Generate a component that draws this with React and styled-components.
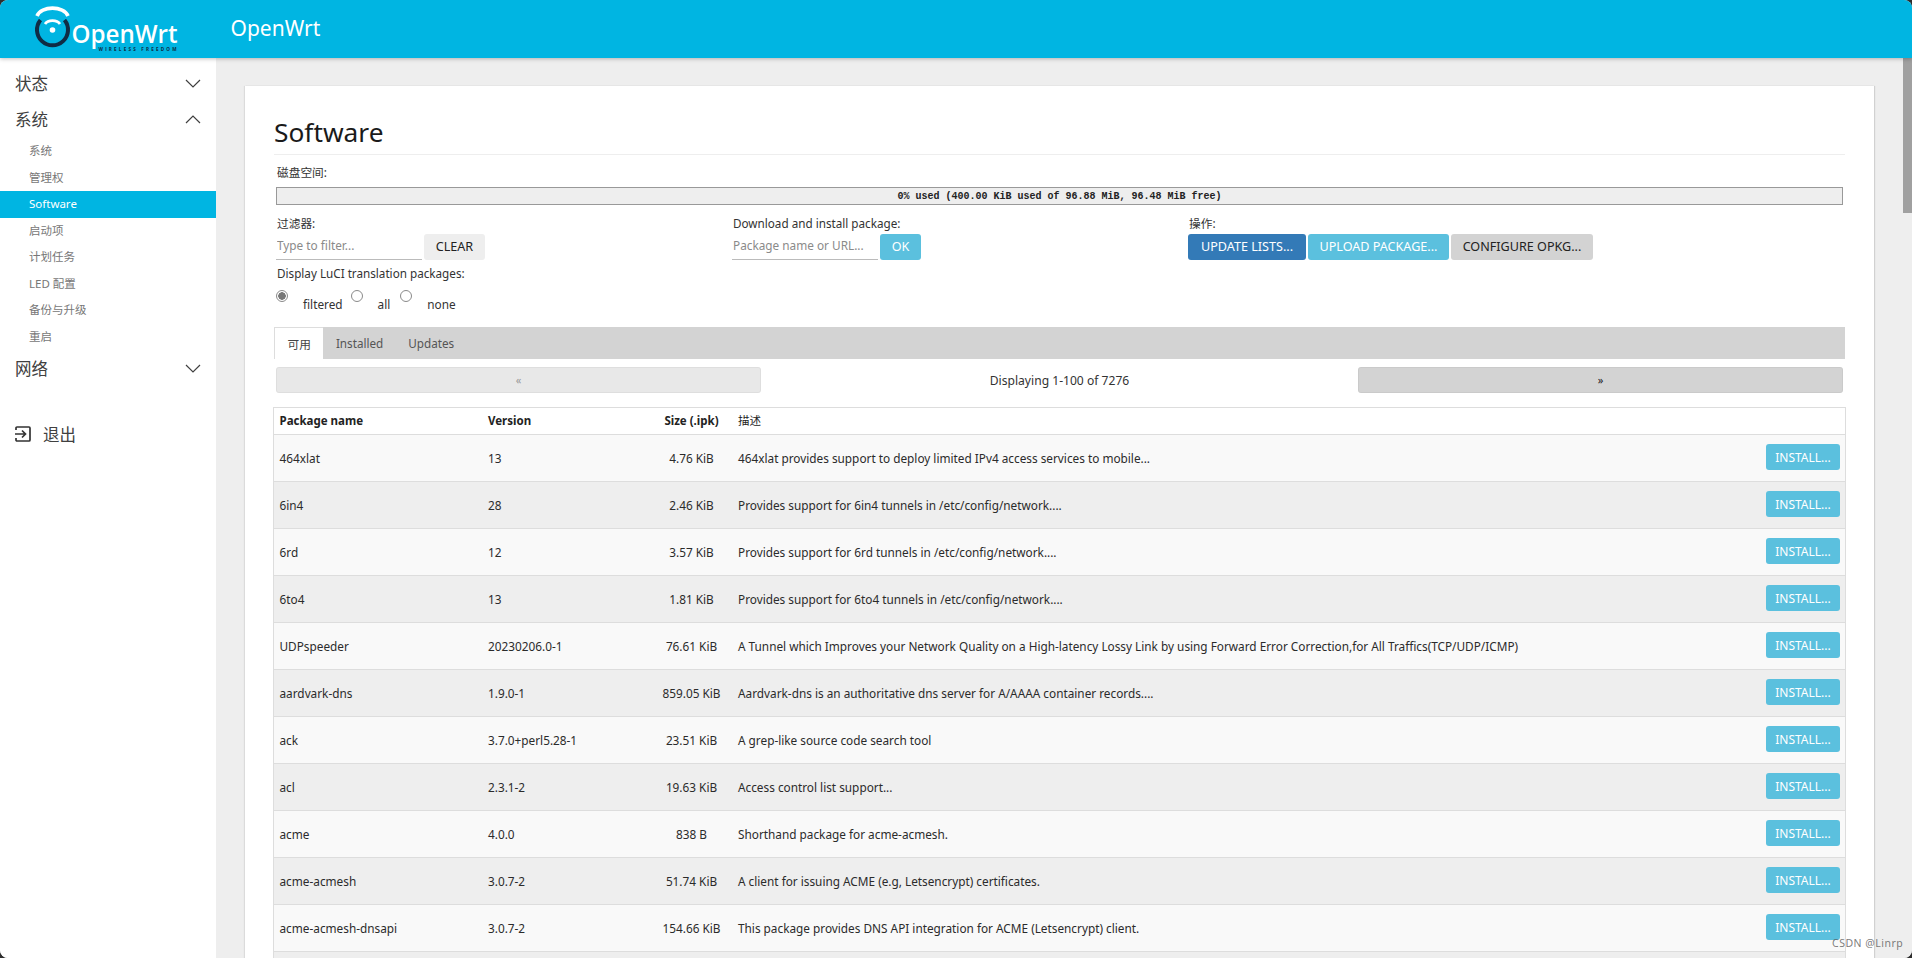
import styled, { createGlobalStyle } from "styled-components";

const GlobalStyle = createGlobalStyle`
html, body {
  margin: 0;
  padding: 0;
  height: 100%;
  overflow: hidden;
  background: #2e2e2e;
}
* {
  box-sizing: border-box;
}
`;

const FONT = `"Noto Sans", "Noto Sans CJK SC", sans-serif`;

const subItems = ["系统", "管理权", "Software", "启动项", "计划任务", "LED 配置", "备份与升级", "重启"];

const packages = [
  ["464xlat", "13", "4.76 KiB", "464xlat provides support to deploy limited IPv4 access services to mobile..."],
  ["6in4", "28", "2.46 KiB", "Provides support for 6in4 tunnels in /etc/config/network...."],
  ["6rd", "12", "3.57 KiB", "Provides support for 6rd tunnels in /etc/config/network...."],
  ["6to4", "13", "1.81 KiB", "Provides support for 6to4 tunnels in /etc/config/network...."],
  ["UDPspeeder", "20230206.0-1", "76.61 KiB", "A Tunnel which Improves your Network Quality on a High-latency Lossy Link by using Forward Error Correction,for All Traffics(TCP/UDP/ICMP)"],
  ["aardvark-dns", "1.9.0-1", "859.05 KiB", "Aardvark-dns is an authoritative dns server for A/AAAA container records...."],
  ["ack", "3.7.0+perl5.28-1", "23.51 KiB", "A grep-like source code search tool"],
  ["acl", "2.3.1-2", "19.63 KiB", "Access control list support..."],
  ["acme", "4.0.0", "838 B", "Shorthand package for acme-acmesh."],
  ["acme-acmesh", "3.0.7-2", "51.74 KiB", "A client for issuing ACME (e.g, Letsencrypt) certificates."],
  ["acme-acmesh-dnsapi", "3.0.7-2", "154.66 KiB", "This package provides DNS API integration for ACME (Letsencrypt) client."],
];

const Chevron = ({ up }) => (
  <svg width="16" height="9" viewBox="0 0 16 9" fill="none" stroke="#404040" strokeWidth="1.2">
    <polyline points={up ? "1,8 8,1 15,8" : "1,1 8,8 15,1"} />
  </svg>
);

const LogoutIcon = () => (
  <svg width="18" height="18" viewBox="0 0 18 18" fill="none" stroke="#333" strokeWidth="1.7">
    <path d="M2 5V3a1 1 0 0 1 1-1h12a1 1 0 0 1 1 1v12a1 1 0 0 1-1 1H3a1 1 0 0 1-1-1v-2" />
    <path d="M1 9h10M8 5.5 11.500 9 8 12.500" />
  </svg>
);

const Logo = () => (
  <svg width="170" height="58" viewBox="0 0 170 58">
    <path d="M3 16C7 5.500 30 5.500 34 16" fill="none" stroke="#fff" strokeWidth="3.600" />
    <path d="M11 24c3-4.500 12-4.500 15 0" fill="none" stroke="#fff" strokeWidth="2.800" />
    <circle cx="18.500" cy="30" r="2.800" fill="#fff" />
    <path d="M6.500 20a15.500 15.500 0 1 0 24 0" fill="none" stroke="#0f2c45" strokeWidth="4" />
    <text x="37.500" y="43" fill="#fff" fontFamily="Open Sans, sans-serif" fontSize="26" fontWeight="600" textLength="106" lengthAdjust="spacingAndGlyphs">OpenWrt</text>
    <text x="64.500" y="51" fill="#0f2c45" fontFamily="Open Sans, sans-serif" fontSize="4.600" fontWeight="700" textLength="78" lengthAdjust="spacing">WIRELESS FREEDOM</text>
  </svg>
);

const App = () => {
  return (
    <Frame>
      <GlobalStyle />
      <Header>
        <LogoBox><Logo /></LogoBox>
        <Brand>OpenWrt</Brand>
      </Header>
      <Body>
        <Sidebar>
          <MenuItem>状态<Chevron /></MenuItem>
          <MenuItem>系统<Chevron up /></MenuItem>
          <SubMenu>
            {subItems.map((item) => (
              <SubItem key={item} $active={item === "Software"}>{item}</SubItem>
            ))}
          </SubMenu>
          <MenuItem>网络<Chevron /></MenuItem>
          <LogoutItem><LogoutIcon />退出</LogoutItem>
        </Sidebar>
        <Main>
          <Card>
            <Title>Software</Title>
            <DiskLabel>磁盘空间:</DiskLabel>
            <Progress>0% used (400.00 KiB used of 96.88 MiB, 96.48 MiB free)</Progress>
            <Controls>
              <div>
                <FieldLabel>过滤器:</FieldLabel>
                <ControlRow>
                  <TextInput placeholder="Type to filter..." />
                  <Button $kind="plain" $width={61}>Clear</Button>
                </ControlRow>
              </div>
              <div>
                <FieldLabel>Download and install package:</FieldLabel>
                <ControlRow>
                  <TextInput placeholder="Package name or URL..." />
                  <Button $kind="info" $width={41}>OK</Button>
                </ControlRow>
              </div>
              <div>
                <FieldLabel>操作:</FieldLabel>
                <ControlRow>
                  <Button $kind="primary" $width={118}>Update lists...</Button>
                  <Button $kind="info" $width={141}>Upload Package...</Button>
                  <Button $kind="gray" $width={142}>Configure opkg...</Button>
                </ControlRow>
              </div>
            </Controls>
            <LanguageLabel>Display LuCI translation packages:</LanguageLabel>
            <RadioRow>
              <Radio type="radio" name="lang" defaultChecked />
              <RadioText $next={8}>filtered</RadioText>
              <Radio type="radio" name="lang" />
              <RadioText $next={10}>all</RadioText>
              <Radio type="radio" name="lang" />
              <RadioText $next={0}>none</RadioText>
            </RadioRow>
            <Tabs>
              <Tab $active>可用</Tab>
              <Tab>Installed</Tab>
              <Tab>Updates</Tab>
            </Tabs>
            <Pager>
              <PageButton $disabled>«</PageButton>
              <PageInfo>Displaying 1-100 of 7276</PageInfo>
              <PageButton>»</PageButton>
            </Pager>
            <PackageTable>
              <colgroup>
                <col width="209" />
                <col width="169" />
                <col width="80" />
                <col />
                <col width="90" />
              </colgroup>
              <thead>
                <tr>
                  <HeadCell>Package name</HeadCell>
                  <HeadCell>Version</HeadCell>
                  <HeadCell $center>Size (.ipk)</HeadCell>
                  <DescHead>描述</DescHead>
                  <HeadCell />
                </tr>
              </thead>
              <tbody>
                {packages.map((pkg) => (
                  <Row key={pkg[0]}>
                    <Cell>{pkg[0]}</Cell>
                    <Cell>{pkg[1]}</Cell>
                    <SizeCell>{pkg[2]}</SizeCell>
                    <DescCell>{pkg[3]}</DescCell>
                    <ActionCell><InstallButton>Install...</InstallButton></ActionCell>
                  </Row>
                ))}
                <Row>
                  <Cell colSpan={5} />
                </Row>
              </tbody>
            </PackageTable>
          </Card>
        </Main>
        <ScrollTrack>
          <ScrollThumb />
        </ScrollTrack>
      </Body>
      <Watermark>CSDN @Linrp</Watermark>
    </Frame>
  );
};

const Frame = styled.div`
position: relative;
height: 958px;
overflow: hidden;
display: flex;
flex-direction: column;
background: #eee;
border-radius: 8px;
font-family: ${FONT};
color: #333;
`;

const Header = styled.header`
height: 58px;
flex: none;
display: flex;
align-items: center;
padding-left: 33.5px;
background: #00b5e2;
box-shadow: 0 1px 4px rgba(0, 0, 0, 0.25);
position: relative;
z-index: 1;
`;

const LogoBox = styled.div`
width: 197px;
height: 58px;
`;

const Brand = styled.div`
color: #fff;
font-size: 21px;
padding-bottom: 3px;
`;

const Body = styled.div`
flex: 1;
display: flex;
min-height: 0;
`;

const Sidebar = styled.nav`
width: 216px;
flex: none;
background: #fff;
padding-top: 7px;
`;

const MenuItem = styled.div`
height: 36px;
display: flex;
align-items: center;
justify-content: space-between;
padding: 0 15px;
font-size: 16.5px;
color: #404040;
`;

const SubMenu = styled.div`
margin-top: 1px;
`;

const SubItem = styled.div`
height: 26.5px;
line-height: 26.5px;
padding-left: 29px;
font-size: 11.5px;
color: ${(props) => (props.$active ? "#fff" : "#777")};
background: ${(props) => (props.$active ? "#00b5e2" : "transparent")};
`;

const LogoutItem = styled.div`
margin-top: 30px;
height: 36px;
display: flex;
align-items: center;
gap: 11px;
padding-left: 14px;
font-size: 16.5px;
color: #404040;
`;

const Main = styled.main`
flex: 1;
min-width: 0;
padding: 28px 29px 0;
overflow: hidden;
`;

const Card = styled.div`
background: #fff;
padding: 0 29px;
min-height: 100%;
box-shadow: 1px 0 1px rgba(0, 0, 0, 0.12), -1px 0 1px rgba(0, 0, 0, 0.08);
`;

const Title = styled.h2`
margin: 0;
height: 69px;
padding-top: 24.5px;
font-size: 26.3px;
line-height: 42px;
font-weight: 400;
color: #1a1a1a;
border-bottom: 1px solid #eee;
`;

const DiskLabel = styled.div`
margin: 7px 0 0 3px;
font-size: 11.7px;
line-height: 20px;
color: #333;
`;

const Progress = styled.div`
margin: 5px 2px 0;
height: 18px;
padding-top: 2px;
background: #eee;
border: 1px solid #999;
font-family: "Liberation Mono", monospace;
font-size: 10px;
font-weight: 700;
line-height: 14px;
text-align: center;
color: #222;
`;

const Controls = styled.div`
margin: 9px 0 0 3px;
display: grid;
grid-template-columns: repeat(3, 456px);
`;

const FieldLabel = styled.div`
font-size: 11.7px;
line-height: 18px;
color: #333;
`;

const ControlRow = styled.div`
margin: 2px 0 0 -1px;
display: flex;
gap: 2px;
`;

const TextInput = styled.input`
width: 146px;
height: 26px;
padding: 0 0 3px 1px;
border: 0;
border-bottom: 1px solid #bbb;
outline: 0;
font-family: ${FONT};
font-size: 11.8px;
color: #333;
background: transparent;

&::placeholder {
  color: #8a8a8a;
  opacity: 1;
}
`;

const BUTTON_COLORS = {
  plain: ["#eee", "#222"],
  info: ["#5bc0de", "#fff"],
  primary: ["#337ab7", "#fff"],
  gray: ["#d3d3d3", "#222"],
};

const Button = styled.button`
width: ${(props) => props.$width}px;
height: 26px;
padding: 0 0 1px;
border: 0;
border-radius: 3px;
font-family: ${FONT};
font-size: 12.6px;
text-transform: uppercase;
white-space: nowrap;
background: ${(props) => BUTTON_COLORS[props.$kind][0]};
color: ${(props) => BUTTON_COLORS[props.$kind][1]};
`;

const LanguageLabel = styled.div`
margin: 4px 0 0 3px;
font-size: 11.7px;
line-height: 18px;
color: #333;
`;

const RadioRow = styled.div`
height: 45px;
padding: 8px 0 0 2px;
display: flex;
align-items: flex-start;
`;

const Radio = styled.input`
appearance: none;
width: 12px;
height: 12px;
margin: 0;
flex: none;
border: 1px solid #8a8a8a;
border-radius: 50%;
background: #fff;

&:checked {
  background: radial-gradient(circle, #777 0 3.5px, #fff 4px);
}
`;

const RadioText = styled.span`
margin: 6px ${(props) => props.$next}px 0 15px;
font-size: 11.8px;
line-height: 16px;
color: #333;
`;

const Tabs = styled.div`
height: 32px;
display: flex;
background: #d3d3d3;
`;

const Tab = styled.div`
height: 32px;
padding: 0 12.5px;
line-height: 32px;
font-size: 11.7px;
color: ${(props) => (props.$active ? "#444" : "#555")};
background: ${(props) => (props.$active ? "#fff" : "transparent")};
border-left: ${(props) => (props.$active ? "1px solid #ddd" : "0")};
border-top: ${(props) => (props.$active ? "1px solid #ddd" : "0")};
`;

const Pager = styled.div`
margin: 8px 2px 0;
display: grid;
grid-template-columns: 485px 1fr 485px;
align-items: center;
`;

const PageButton = styled.div`
height: 26px;
line-height: 26px;
text-align: center;
border-radius: 3px;
font-size: 11px;
background: ${(props) => (props.$disabled ? "#e8e8e8" : "#d3d3d3")};
color: ${(props) => (props.$disabled ? "#999" : "#222")};
box-shadow: inset 0 0 0 1px rgba(0, 0, 0, 0.04);
`;

const PageInfo = styled.div`
text-align: center;
font-size: 12.1px;
color: #333;
`;

const PackageTable = styled.table`
margin: 14px 0 0 -1px;
width: 1573px;
table-layout: fixed;
border-collapse: collapse;
border: 1px solid #ddd;
font-size: 11.8px;
color: #2b2b2b;
`;

const HeadCell = styled.th`
height: 27px;
padding: 0 0 1px ${(props) => (props.$center ? "0" : "5.5px")};
font-size: 11.5px;
font-weight: 700;
text-align: ${(props) => (props.$center ? "center" : "left")};
border-bottom: 1px solid #ddd;
white-space: nowrap;
color: #222;
`;

const DescHead = styled(HeadCell)`
padding-left: 6.5px;
padding-bottom: 2px;
font-weight: 400;
`;

const Row = styled.tr`
height: 47px;
border-bottom: 1px solid #ddd;

&:nth-child(odd) {
  background: #f9f9f9;
}
&:nth-child(even) {
  background: #eee;
}
`;

const Cell = styled.td`
padding: 0 0 0 5.5px;
white-space: nowrap;
overflow: visible;
`;

const DescCell = styled(Cell)`
padding-left: 6.5px;
`;

const SizeCell = styled.td`
padding: 0;
text-align: center;
white-space: nowrap;
`;

const ActionCell = styled.td`
padding: 0 5px 0 0;
text-align: right;
`;

const InstallButton = styled.button`
width: 74px;
height: 26px;
margin-bottom: 2px;
padding: 0;
border: 0;
border-radius: 3px;
background: #5bc0de;
color: #fff;
font-family: ${FONT};
font-size: 12px;
text-transform: uppercase;
vertical-align: middle;
`;

const ScrollTrack = styled.div`
width: 9px;
flex: none;
background: #eee;
`;

const ScrollThumb = styled.div`
height: 155px;
background: #a0a0a0;
`;

const Watermark = styled.div`
position: absolute;
left: 1832px;
top: 936px;
font-size: 10.5px;
line-height: 14px;
letter-spacing: 0.5px;
color: rgba(90, 90, 90, 0.8);
`;

export default App;
